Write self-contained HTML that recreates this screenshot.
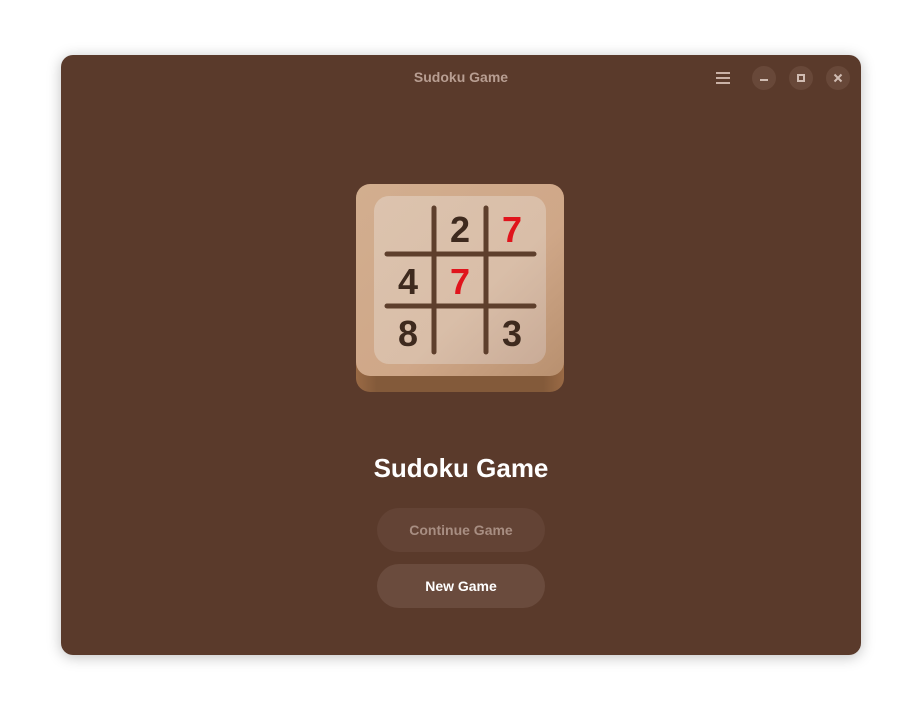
<!DOCTYPE html>
<html><head><meta charset="utf-8"><style>
html,body{margin:0;padding:0;width:922px;height:722px;background:#fff;overflow:hidden;font-family:"Liberation Sans","DejaVu Sans",sans-serif}
.win{position:absolute;left:61px;top:55px;width:800px;height:600px;background:#5a3a2b;border-radius:12px;box-shadow:0 2px 14px rgba(0,0,0,.25)}
.title{position:absolute;left:0;width:800px;top:14px;text-align:center;color:#b89e92;font-size:14px;font-weight:bold}
.cb{position:absolute;top:11px;width:24px;height:24px;border-radius:12px;background:#684839}
.big{position:absolute;left:0;width:800px;top:398px;text-align:center;color:#fff;font-size:26px;font-weight:bold}
.btn{position:absolute;left:316px;width:168px;height:44px;border-radius:22px;text-align:center;line-height:44px;font-size:14px;font-weight:bold}
</style></head><body>
<div class="win">
<div class="title">Sudoku Game</div>
<svg style="position:absolute;left:655px;top:16px" width="18" height="14"><rect x="0" y="1" width="14" height="2" fill="#c9b1a6"/><rect x="0" y="6" width="14" height="2" fill="#c9b1a6"/><rect x="0" y="11" width="14" height="2" fill="#c9b1a6"/></svg>
<div class="cb" style="left:691px"><div style="position:absolute;left:8px;top:13px;width:8px;height:2px;background:#d0bcb2"></div></div>
<div class="cb" style="left:728px"><div style="position:absolute;left:8px;top:8px;width:4px;height:4px;border:2px solid #d0bcb2"></div></div>
<div class="cb" style="left:765px"><svg width="24" height="24"><path d="M8.5 8.5L15.5 15.5M15.5 8.5L8.5 15.5" stroke="#d0bcb2" stroke-width="2"/></svg></div>

<svg style="position:absolute;left:295px;top:129px" width="208" height="208" viewBox="0 0 208 208">
<defs>
<linearGradient id="base" x1="0" x2="1"><stop offset="0" stop-color="#9a6a45"/><stop offset=".1" stop-color="#835a3a"/><stop offset=".9" stop-color="#835a3a"/><stop offset="1" stop-color="#9a6a45"/></linearGradient>
<linearGradient id="top" x1="0" y1="0" x2="1" y2="1"><stop offset="0" stop-color="#d2ae8f"/><stop offset=".6" stop-color="#cfa788"/><stop offset="1" stop-color="#b8906f"/></linearGradient>
<linearGradient id="pan" x1="0" y1="0" x2="1" y2="1"><stop offset="0" stop-color="#dcc3ae"/><stop offset=".6" stop-color="#d9bea8"/><stop offset="1" stop-color="#c9ab97"/></linearGradient>
</defs>
<rect x="0" y="16" width="208" height="192" rx="14" fill="url(#base)"/>
<rect x="0" y="0" width="208" height="192" rx="14" fill="url(#top)"/>
<rect x="18" y="12" width="172" height="168" rx="15" fill="url(#pan)"/>
<g stroke="#5e3f2c" stroke-width="5" stroke-linecap="round">
<line x1="78" y1="24" x2="78" y2="168"/><line x1="130" y1="24" x2="130" y2="168"/>
<line x1="31" y1="70" x2="178" y2="70"/><line x1="31" y1="122" x2="178" y2="122"/>
</g>
<g font-family="Liberation Sans,sans-serif" font-weight="bold" font-size="36" text-anchor="middle">
<text x="104" y="58" fill="#3e2a1e">2</text>
<text x="156" y="58" fill="#e0141c">7</text>
<text x="52" y="110" fill="#3e2a1e">4</text>
<text x="104" y="110" fill="#e0141c">7</text>
<text x="52" y="162" fill="#3e2a1e">8</text>
<text x="156" y="162" fill="#3e2a1e">3</text>
</g>
</svg>

<div class="big">Sudoku Game</div>
<div class="btn" style="top:453px;background:#634335;color:#a88e82">Continue Game</div>
<div class="btn" style="top:509px;background:#6a4b3d;color:#fff">New Game</div>
</div>
</body></html>
